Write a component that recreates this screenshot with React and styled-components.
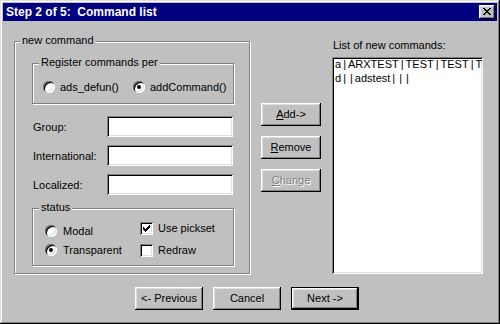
import React from 'react'
import styled, { createGlobalStyle, css } from 'styled-components'

const GlobalStyle = createGlobalStyle`
  html, body {
    margin: 0;
    padding: 0;
    background: #c0c0c0;
  }
  body {
    font-family: "Liberation Sans", Arial, sans-serif;
    font-size: 11px;
    color: #000;
  }
`

const raised = css`
  box-shadow: inset -1px -1px #000, inset 1px 1px #fff, inset -2px -2px #808080, inset 2px 2px #dfdfdf;
`
const defaultRaised = css`
  box-shadow: inset 0 0 0 1px #000, inset -2px -2px #000, inset 2px 2px #fff, inset -3px -3px #808080, inset 3px 3px #dfdfdf;
`
const sunken = css`
  box-shadow: inset 1px 1px #808080, inset -1px -1px #fff, inset 2px 2px #000, inset -2px -2px #dfdfdf;
`

const Window = styled.div`
  box-sizing: border-box;
  width: 500px;
  height: 324px;
  padding: 3px;
  background: #c0c0c0;
  box-shadow: inset -1px -1px #000, inset 1px 1px #dfdfdf, inset -2px -2px #808080, inset 2px 2px #fff;
  display: flex;
  flex-direction: column;
`

const TitleBar = styled.div`
  height: 18px;
  background: #000080;
  display: flex;
  align-items: center;
  justify-content: space-between;
  padding: 0 2px 0 3px;
`

const TitleText = styled.span`
  color: #fff;
  font-weight: bold;
  font-size: 12px;
  white-space: pre;
  line-height: 18px;
`

const CloseButton = styled.div`
  width: 16px;
  height: 14px;
  background: #c0c0c0;
  ${raised};
  display: flex;
  align-items: center;
  justify-content: center;
  padding-bottom: 1px;
  box-sizing: border-box;
`

const Main = styled.div`
  display: flex;
  align-items: flex-start;
  padding: 20px 0 0 11px;
`

const GroupBox = styled.div`
  position: relative;
  box-sizing: border-box;
  width: ${p => p.$w}px;
  height: ${p => p.$h}px;
  margin-top: ${p => p.$mt || 0}px;
  border: 1px solid #808080;
  box-shadow: inset 1px 1px #fff, 1px 1px #fff;
`

const Legend = styled.span`
  position: absolute;
  top: -8px;
  left: ${p => p.$left}px;
  padding: 0 2px;
  line-height: 13px;
  background: #c0c0c0;
  white-space: nowrap;
`

const OuterGroup = styled(GroupBox)`
  padding: 21px 15px 0 17px;
`

const RegisterGroup = styled(GroupBox)`
  display: grid;
  grid-template-columns: 90px auto;
  align-items: center;
  padding: 7px 0 0 10px;
`

const StatusGroup = styled(GroupBox)`
  display: grid;
  grid-template-columns: 95px auto;
  align-items: start;
  padding: 11px 0 0 12px;
`

const OptionColumn = styled.div`
  display: flex;
  flex-direction: column;
  gap: ${p => p.$gap}px;
  margin-top: ${p => p.$mt || 0}px;
`

const Option = styled.label`
  display: flex;
  align-items: center;
  gap: ${p => p.$gap || 5}px;
  height: 16px;
  line-height: 13px;
  white-space: nowrap;
`

const RadioCircle = styled.span`
  position: relative;
  flex: none;
  width: 12px;
  height: 12px;
  border-radius: 50%;
  background: #fff;
  box-shadow: inset 1px 1px #808080, inset -1px -1px #fff, inset 2px 2px #000, inset -2px -2px #dfdfdf;
  ${p => p.$checked && css`
    &::after {
      content: '';
      position: absolute;
      left: 4px;
      top: 4px;
      width: 4px;
      height: 4px;
      border-radius: 50%;
      background: #000;
    }
  `}
`

const CheckBox = styled.span`
  flex: none;
  width: 13px;
  height: 13px;
  box-sizing: border-box;
  background: #fff;
  ${sunken};
  display: flex;
  align-items: center;
  justify-content: center;
`

const FieldRow = styled.div`
  display: flex;
  align-items: center;
  margin-top: ${p => p.$mt}px;
`

const FieldLabel = styled.span`
  width: 75px;
  padding: 2px 0 0 1px;
  box-sizing: border-box;
  line-height: 13px;
`

const TextField = styled.div`
  width: 126px;
  height: 21px;
  background: #fff;
  ${sunken};
`

const ButtonColumn = styled.div`
  display: flex;
  flex-direction: column;
  gap: 10px;
  margin-left: 11px;
  padding-top: 62px;
`

const PushButton = styled.div`
  box-sizing: border-box;
  width: ${p => p.$w}px;
  height: 23px;
  background: #c0c0c0;
  display: flex;
  align-items: center;
  justify-content: center;
  line-height: 13px;
  white-space: nowrap;
  ${p => (p.$default ? defaultRaised : raised)};
  ${p => p.$disabled && css`
    color: #808080;
    text-shadow: 1px 1px #fff;
  `}
`

const ListColumn = styled.div`
  display: flex;
  flex-direction: column;
  margin: -3px 0 0 11px;
`

const ListLabel = styled.div`
  line-height: 14px;
  padding-left: 1px;
  margin-bottom: 5px;
`

const ListBox = styled.div`
  box-sizing: border-box;
  width: 151px;
  height: 217px;
  background: #fff;
  ${sunken};
  padding: 2px 3px;
  overflow: hidden;
`

const ListLine = styled.div`
  line-height: 14px;
  white-space: pre;
  margin-top: ${p => p.$mt || 0}px;
`

const Pipe = styled.span`
  padding: 0 2px;
`

const Footer = styled.div`
  display: flex;
  gap: 10px;
  padding-left: 132px;
  margin-top: 13px;
`

const CloseGlyph = () => (
  <svg width="8" height="7" viewBox="0 0 8 7" shapeRendering="crispEdges">
    <path
      fill="#000"
      d="M0 0h2v1h-2zM6 0h2v1h-2zM1 1h2v1h-2zM5 1h2v1h-2zM2 2h4v1h-4zM3 3h2v1h-2zM2 4h4v1h-4zM1 5h2v1h-2zM5 5h2v1h-2zM0 6h2v1h-2zM6 6h2v1h-2z"
    />
  </svg>
)

const CheckGlyph = () => (
  <svg width="7" height="7" viewBox="0 0 7 7" shapeRendering="crispEdges">
    <path
      fill="#000"
      d="M6 0h1v3h-1zM5 1h1v3h-1zM4 2h1v3h-1zM0 2h1v3h-1zM1 3h1v3h-1zM2 4h1v3h-1zM3 3h1v3h-1z"
    />
  </svg>
)

const Radio = ({ checked, gap, children }) => (
  <Option $gap={gap}>
    <RadioCircle $checked={checked} />
    <span>{children}</span>
  </Option>
)

const Check = ({ checked, children }) => (
  <Option>
    <CheckBox>{checked && <CheckGlyph />}</CheckBox>
    <span>{children}</span>
  </Option>
)

const Entry = ({ text, mt }) => {
  const parts = text.split('|')
  return (
    <ListLine $mt={mt}>
      {parts.map((part, i) => (
        <React.Fragment key={i}>
          {i > 0 && <Pipe>|</Pipe>}
          {part}
        </React.Fragment>
      ))}
    </ListLine>
  )
}

const commands = ['a|ARXTEST|TEST|TEST|TEST', 'd||adstest|||']

export default function App() {
  return (
    <>
      <GlobalStyle />
      <Window>
        <TitleBar>
          <TitleText>{'Step 2 of 5:  Command list'}</TitleText>
          <CloseButton>
            <CloseGlyph />
          </CloseButton>
        </TitleBar>

        <Main>
          <OuterGroup $w={236} $h={233}>
            <Legend $left={5}>new command</Legend>

            <RegisterGroup $w={202} $h={41}>
              <Legend $left={6}>Register commands per</Legend>
              <Radio gap={5}>ads_defun()</Radio>
              <Radio gap={5} checked>addCommand()</Radio>
            </RegisterGroup>

            <FieldRow $mt={12}>
              <FieldLabel>Group:</FieldLabel>
              <TextField />
            </FieldRow>
            <FieldRow $mt={8}>
              <FieldLabel>International:</FieldLabel>
              <TextField />
            </FieldRow>
            <FieldRow $mt={8}>
              <FieldLabel>Localized:</FieldLabel>
              <TextField />
            </FieldRow>

            <StatusGroup $w={202} $h={58} $mt={13}>
              <Legend $left={6}>status</Legend>
              <OptionColumn $gap={3} $mt={3}>
                <Radio gap={6}>Modal</Radio>
                <Radio gap={6} checked>Transparent</Radio>
              </OptionColumn>
              <OptionColumn $gap={6}>
                <Check checked>Use pickset</Check>
                <Check>Redraw</Check>
              </OptionColumn>
            </StatusGroup>
          </OuterGroup>

          <ButtonColumn>
            <PushButton $w={60}><u>A</u>dd-&gt;</PushButton>
            <PushButton $w={60}><u>R</u>emove</PushButton>
            <PushButton $w={60} $disabled><u>C</u>hange</PushButton>
          </ButtonColumn>

          <ListColumn>
            <ListLabel>List of new commands:</ListLabel>
            <ListBox>
              {commands.map((c, i) => (
                <Entry key={i} text={c} mt={i === 0 ? -2 : 0} />
              ))}
            </ListBox>
          </ListColumn>
        </Main>

        <Footer>
          <PushButton $w={68}>&lt;- Previous</PushButton>
          <PushButton $w={68}>Cancel</PushButton>
          <PushButton $w={68} $default>Next -&gt;</PushButton>
        </Footer>
      </Window>
    </>
  )
}
